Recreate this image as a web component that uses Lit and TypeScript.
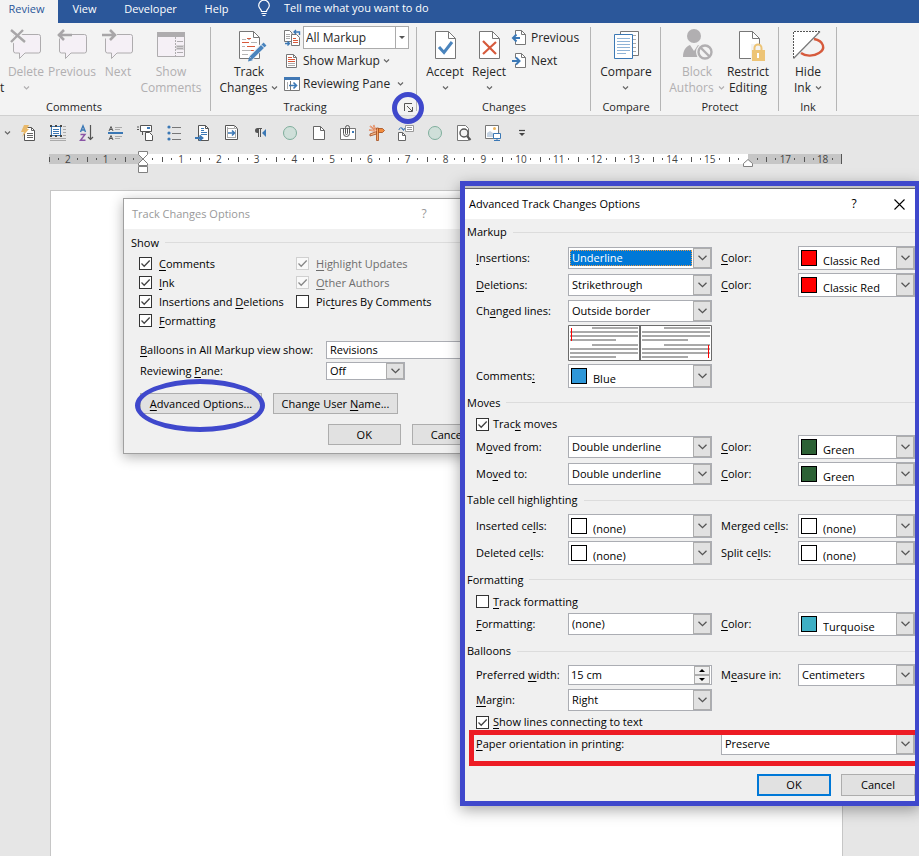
import { LitElement, html, css, svg, nothing, TemplateResult } from "lit";
import { customElement } from "lit/decorators.js";
import { styleMap } from "lit/directives/style-map.js";
import { classMap } from "lit/directives/class-map.js";

const icon = (w: number, h: number, body: unknown) =>
  html`<svg class="icon" width=${w} height=${h} viewBox="0 0 ${w} ${h}" fill="none" aria-hidden="true">${body}</svg>`;

const chevron = html`<svg class="chev" width="7" height="4" viewBox="0 0 7 4" fill="none" aria-hidden="true"><path d="M1 .5 3.5 3 6 .5" stroke="currentColor" stroke-width="1.2"/></svg>`;

const bubble = svg`<path d="M5 5.500H28.500a2 2 0 0 1 2 2V22a2 2 0 0 1-2 2H15L9.500 29.500V24H5.500a2 2 0 0 1-2-2V7.500a2 2 0 0 1 2-2Z" fill="#f5f0f6" stroke="#aeacae"/>`;

const big = {
  remove: icon(32, 32, svg`${bubble}<path d="M1 1 15 13M13 1 1 13" stroke="#f3f3f3" stroke-width="5"/><path d="M1 1 15 13M13 1 1 13" stroke="#a8a6a8" stroke-width="2.400"/>`),
  back: icon(32, 32, svg`${bubble}<path d="M0 6H16" stroke="#f3f3f3" stroke-width="7"/><path d="M2 6H16M8 1 3 6 8 11" stroke="#a8a6a8" stroke-width="2.600"/>`),
  forward: icon(32, 32, svg`${bubble}<path d="M0 6H15" stroke="#f3f3f3" stroke-width="7"/><path d="M0 6H13M8 1 13 6 8 11" stroke="#a8a6a8" stroke-width="2.600"/>`),
  pane: icon(32, 32, svg`<path d="M2.500 3.500H29.500V27.500H2.500Z" fill="#f5f0f6" stroke="#aeacae"/><path d="M2 3H30V8H2Z" fill="#aeacae"/><path d="M20.500 8V27" stroke="#aeacae" stroke-dasharray="2 1"/><path d="M22 12.500H28M22 23.500H28" stroke="#aeacae"/><path d="M21 16H29V21H21Z" fill="#d4d2d4"/><path d="M22 17.500H28M22 19.500H28" stroke="#aeacae"/>`),
  track: icon(32, 32, svg`<path d="M6.500 2.500H20.500L26.500 8.500V29.500H6.500Z" fill="#fff" stroke="#777"/><path d="M20.500 2.500V8.500H26.500" stroke="#777"/><path d="M9 10.500H13M18 13.500H24M9 17.500H12M9 21.500H18M9 25.500H15M15 10.500H17" stroke="#b5b5b5"/><path d="M14 9.500H18M9 13.500H16M14 17.500H22M18 21.500H22" stroke="#d8593a" stroke-width="1.200"/><path d="M18 28.500 31 15.500" stroke="#f3f3f3" stroke-width="6"/><path d="M18 29 32 15" stroke="#4a84bd" stroke-width="4"/><path d="M28 15.500 32 19.500" stroke="#fff"/><path d="M15 32.500 16.200 27.800 19.700 31.300Z" fill="#4a84bd"/>`),
  accept: icon(32, 32, svg`<path d="M6.500 2.500H19.500L26.500 9.500V29.500H6.500Z" fill="#fff" stroke="#777"/><path d="M19.500 2.500V9.500H26.500" stroke="#777"/><path d="M10 18 15 23.500 23 13" stroke="#4a84bd" stroke-width="3"/>`),
  reject: icon(32, 32, svg`<path d="M6.500 2.500H19.500L26.500 9.500V29.500H6.500Z" fill="#fff" stroke="#777"/><path d="M19.500 2.500V9.500H26.500" stroke="#777"/><path d="M10 12 23 25M23 13 10 25" stroke="#d65a3c" stroke-width="2.200"/>`),
  compare: icon(32, 32, svg`<path d="M10.500 2.500H28.500V26.500H10.500Z" fill="#fff" stroke="#777"/><path d="M23 6.500H26M23 10.500H26M23 14.500H26M23 18.500H26M23 22.500H26" stroke="#aaa"/><path d="M4.500 5.500H22.500V29.500H4.500Z" fill="#fff" stroke="#3b78b5"/><path d="M7 9.500H20M7 12.500H20M7 15.500H20M7 18.500H20M7 21.500H20M7 24.500H16" stroke="#8fb3d6"/>`),
  block: icon(32, 32, svg`<circle cx="13" cy="7" r="7" fill="#b1afb1"/><path d="M2 28C2 20 6 17 9 16L13 22 17 16 23 19 16 28Z" fill="#b1afb1"/><circle cx="24" cy="23" r="9" fill="#f3f3f3"/><circle cx="24" cy="23" r="6.500" stroke="#b1afb1" stroke-width="2.400"/><path d="M19.500 18.500 28.500 27.500" stroke="#b1afb1" stroke-width="2.400"/>`),
  restrict: icon(32, 32, svg`<path d="M7.500 2.500H20.500L27.500 9.500V29.500H7.500Z" fill="#fff" stroke="#777"/><path d="M20.500 2.500V9.500H27.500" stroke="#777"/><path d="M19 15H33V32H19Z" fill="#f3f3f3"/><path d="M20 21H33V32H20Z" fill="#edc476"/><path d="M22.500 21V19a3.500 3.500 0 0 1 7 0V21" stroke="#edc476" stroke-width="2"/><path d="M26 24V29" stroke="#fff" stroke-width="2"/>`),
  ink: icon(32, 32, svg`<path d="M22 10C32 12 34 20 27 24 21 28 13 27 9 24" stroke="#d65a3c" stroke-width="2.400"/><path d="M1 2H28L1 29Z" fill="#fff"/><path d="M28 2.500H1.500V29" stroke="#555" stroke-dasharray="2 1"/><path d="M28 2.500 1.500 29.500" stroke="#777" stroke-width="1.200"/>`),
};

const small = {
  markup: icon(16, 16, svg`<path d="M.5.500H5.500L8 3V11.500H.5Z" fill="#fff" stroke="#777"/><path d="M2 4.500H6M2 6.500H6M2 8.500H6" stroke="#aaa"/><path d="M7.500 4.500H12.500L15.500 7.500V15.500H7.500Z" fill="#fff" stroke="#777"/><path d="M9 8.500H12M9 10.500H14M9 12.500H14" stroke="#d8593a"/><path d="M1 13.500H5M3.500 11.500 5.500 13.500 3.500 15.500M15.500 5V2H10M12 0 10 2 12 4" stroke="#3b78b5" stroke-width="1.400"/>`),
  show: icon(16, 16, svg`<path d="M2.500 1.500H9.500L12.500 4.500V14.500H2.500Z" fill="#fff" stroke="#777"/><path d="M9.500 1.500V4.500H12.500" stroke="#777"/><path d="M4 4.500H8M4 6.500H11M4 8.500H11" stroke="#d8593a"/><path d="M4 10.500H11M4 12.500H11" stroke="#aaa"/>`),
  review: icon(16, 16, svg`<path d="M.5 1.500H15.500V14.500H.5Z" fill="#fff" stroke="#777"/><path d="M0 1H16V4H0Z" fill="#4178b4"/><path d="M3.500 6V13" stroke="#aaa"/><path d="M6.500 5V14" stroke="#777"/><path d="M5 9.500H12M9.500 6.500 12.500 9.500 9.500 12.500" stroke="#3b78b5" stroke-width="1.600"/>`),
  prev: icon(16, 16, svg`<path d="M3.500 5V.5H9.500L13.500 4.500V14.500H3.500V11" fill="#fff" stroke="#777"/><path d="M9.500.5V4.500H13.500" stroke="#777"/><path d="M1.500 8H8M4.500 4.500 1 8 4.500 11.500" stroke="#3b78b5" stroke-width="2"/>`),
  next: icon(16, 16, svg`<path d="M3.500 5V.5H9.500L13.500 4.500V14.500H3.500V11" fill="#fff" stroke="#777"/><path d="M9.500.5V4.500H13.500" stroke="#777"/><path d="M0 8H7M4 4.500 7.500 8 4 11.500" stroke="#3b78b5" stroke-width="2"/>`),
};

const quick: [string, TemplateResult][] = [
  ["AutoText", icon(16, 16, svg`<path d="M3.500 2.500H10.500L13.500 5.500V15.500H3.500Z" fill="#fff" stroke="#555"/><path d="M10.500 2.500V5.500H13.500M6 8.500H12M6 10.500H12M6 12.500H12" stroke="#666"/><path d="M3 0H8L6 4H8L1 12 3 7H0Z" fill="#e9b96a"/>`)],
  ["Text box", icon(16, 16, svg`<path d="M0 15.500H16M0 13.500H16M13 1.500H16M13 4.500H16M13 7.500H16M13 10.500H16" stroke="#aaa"/><path d="M1.500 1.500H10.500V10.500H1.500Z" fill="#fff" stroke="#3b78b5"/><path d="M3 4.500H9M3 6.500H9M3 8.500H9" stroke="#3b78b5"/><path d="M0 0H2V2H0ZM10 0H12V2H10ZM0 10H2V12H0ZM10 10H12V12H10ZM5 0H7V2H5ZM5 10H7V12H5Z" fill="#444"/>`)],
  ["Sort", icon(16, 16, svg`<path d="M1.500 7 4 .8 6.500 7M2.200 5H6" stroke="#3b78b5" stroke-width="1.400"/><path d="M1.500 9.500H6L1.500 15.200H6.500" stroke="#8a55a5" stroke-width="1.400"/><path d="M11.500 0V15M9 12 11.500 14.500 14 12" stroke="#555" stroke-width="1.200"/>`)],
  ["Spacing", icon(16, 16, svg`<path d="M1 6 3 1.500 5 6M2 4.500H4M1 15 3 10.500 5 15M2 13.500H4" stroke="#555"/><path d="M7 2.500H14M7 4.500H12M7 11.500H14M7 13.500H12" stroke="#aaa"/><path d="M0 8H15" stroke="#3b78b5" stroke-width="2"/>`)],
  ["Link boxes", icon(16, 16, svg`<path d="M0 2H2M0 4.500H2" stroke="#555"/><path d="M3.500.500H14.500V6.500H3.500Z" fill="#fff" stroke="#555"/><path d="M10 2H13V4H10Z" fill="#3b78b5"/><path d="M8.500 7.500H12.500L15.500 10.500V15.500H8.500Z" fill="#fff" stroke="#555"/><path d="M5.500 7V10" stroke="#555"/>`)],
  ["Bullets", icon(16, 16, svg`<circle cx="3" cy="2" r="1.600" fill="#3b78b5"/><circle cx="3" cy="8" r="1.600" fill="#3b78b5"/><circle cx="3" cy="14" r="1.600" fill="#3b78b5"/><path d="M6 2.500H15M6 8.500H15M6 14.500H15" stroke="#777"/>`)],
  ["Insert file", icon(16, 16, svg`<path d="M3.500.500H10.500L13.500 3.500V15.500H3.500Z" fill="#fff" stroke="#555"/><path d="M10.500.500V3.500H13.500" stroke="#555"/><path d="M6 3.500H9M6 5.500H9M6 7.500H12M6 9.500H12" stroke="#3b78b5"/><path d="M0 13H7M4.500 10.500 7.500 13 4.500 15.500" stroke="#3b78b5" stroke-width="1.800"/>`)],
  ["Page fit", icon(16, 16, svg`<path d="M1.500.500H10.500L13.500 3.500V14.500H1.500Z" fill="#fff" stroke="#555"/><path d="M3.500 2V13M11.500 5V13M3 3.500H10M3 12.500H12M10.500.500V3.500H13.500" stroke="#aaa"/><path d="M4 8H10M8 5.500 10.500 8 8 10.500" stroke="#3b78b5" stroke-width="1.600"/>`)],
  ["Right to left", icon(16, 16, svg`<path d="M6 3H4.500a2.500 2.500 0 0 0 0 5H5V12H6V4H7V12H8V4H9V3Z" fill="#555"/><path d="M13 4V12L9 8Z" fill="#3b78b5"/>`)],
  ["Record", icon(16, 16, svg`<circle cx="8" cy="8" r="6.500" fill="#cfdfd9" stroke="#7fae9c"/>`)],
  ["New", icon(16, 16, svg`<path d="M2.500 1.500H9.500L13.500 5.500V14.500H2.500Z" fill="#fff" stroke="#666"/><path d="M9.500 1.500V5.500H13.500" stroke="#666"/>`)],
  ["Attach", icon(16, 16, svg`<path d="M.5 3.500H15.500V14.500H.5Z" fill="#fff" stroke="#777"/><path d="M12 6H14V8H12Z" fill="#3b78b5"/><path d="M3.500 3V8.500a3 3 0 0 0 6 0V2.500a2 2 0 0 0-4 0V8.500a1 1 0 0 0 2 0V3" stroke="#555" stroke-width="1"/>`)],
  ["Signpost", icon(16, 16, svg`<path d="M7.500 3H9.500V15.500H7.500Z" fill="#f6a868" stroke="#a24a1c" stroke-width=".8"/><path d="M9.500 3.500H13.500L15.500 5.500 13.500 7.500H9.500Z" fill="#f28c3c" stroke="#a24a1c" stroke-width=".8"/><path d="M7.500 6.500 1 9 1 11 7.500 9Z" fill="#f6b98a" stroke="#a24a1c" stroke-width=".8"/><path d="M1 1 7 6M4.500 0 7 6M0 5 7 6" stroke="#d8693a" stroke-width="1.600"/><path d="M1 1 7 6M4.500 0 7 6M0 5 7 6" stroke="#fbd9bd" stroke-width=".6"/>`)],
  ["Envelope", icon(16, 16, svg`<path d="M7.500.500H15.500V6.500H7.500Z" fill="#fff" stroke="#999"/><path d="M9 2.500H14M9 4.500H14" stroke="#999"/><path d="M1 5C1 2 5 2 5.500 5M3.500 3 5.500 5.500 7 3" stroke="#3b78b5"/><path d="M.5 7.500H4.500L7.500 10.500V15.500H.5Z" fill="#fff" stroke="#666"/><path d="M4.500 7.500V10.500H7.500" stroke="#666"/>`)],
  ["Stop", icon(16, 16, svg`<circle cx="8" cy="8" r="6.500" fill="#cfdfd9" stroke="#7fae9c"/>`)],
  ["Print preview", icon(16, 16, svg`<path d="M1.500.500H9.500L12.500 3.500V15.500H1.500Z" fill="#fff" stroke="#777"/><circle cx="8" cy="8" r="4" fill="#f3f3f3" stroke="#555" stroke-width="1.400"/><path d="M11 11 14.500 15" stroke="#555" stroke-width="2"/>`)],
  ["Picture", icon(16, 16, svg`<path d="M.5.500H13.500V13.500H.5Z" fill="#fff" stroke="#777"/><path d="M2 12V8L5 6 8 8V12Z" fill="#c5d3e2"/><circle cx="9.500" cy="3.500" r="1.500" fill="#edb45c"/><path d="M8.500 8.500H15.500V13.500H8.500Z" fill="#fff" stroke="#3b78b5"/><path d="M9 15.500H15M12 13V15" stroke="#3b78b5"/>`)],
  ["Customize", icon(16, 16, svg`<path d="M5 5.500H11" stroke="#444" stroke-width="1.200"/><path d="M5 8H11L8 11Z" fill="#444"/>`)],
];

interface Combo { id: string; value: string; swatch?: string; active?: boolean; kind?: string }

const combo = (c: Combo) => html`
  <span class=${classMap({ combo: true, tinted: !!c.swatch, active: !!c.active, [c.kind ?? "plain"]: true })}>
    ${c.swatch ? html`<i class="swatch" style=${styleMap({ background: c.swatch })}></i>` : nothing}
    <select id=${c.id}><option>${c.value}</option></select>
    <span class="drop"><svg width="9" height="6" viewBox="0 0 9 6" fill="none" aria-hidden="true"><path d="M.5.700 4.500 4.700 8.500.700" stroke="#555" stroke-width="1.300"/></svg></span>
  </span>`;

const field = (label: unknown, c: Combo, cls = "") => html`<label class=${"lbl " + cls} for=${c.id}>${label}</label>${combo(c)}`;

const tick = (label: unknown, checked: boolean, disabled = false) =>
  html`<label class=${classMap({ tick: true, off: disabled })}><input type="checkbox" .checked=${checked} ?disabled=${disabled}><span>${label}</span></label>`;

const controls = css`
  * { box-sizing: border-box; }
  button, select, input { font: inherit; color: inherit; margin: 0; }
  u { text-underline-offset: 2px; text-decoration-thickness: 1px; }
  :host { display: block; font: 11px/16px "Open Sans", "Noto Sans", sans-serif; color: #000; }
  .title { display: flex; align-items: center; height: 30px; background: #fff; padding: 0 8px 0 4px; }
  .title h2 { flex: 1; margin: 0; font: inherit; }
  .title button { border: 0; background: none; padding: 0; display: grid; place-items: center; }
  .help { font-size: 12px; }
  .heading { display: flex; align-items: center; gap: 6px; margin: 0; font: inherit; }
  .heading::after { content: ""; flex: 1; height: 1px; background: #dcdcdc; }
  .lbl { white-space: nowrap; }
  .combo { display: flex; align-items: center; background: #fff; border: 1px solid #abadb3; height: 22px; min-width: 0; padding-left: 1px; }
  .combo select { appearance: none; border: 0; background: none; flex: 1; min-width: 0; height: 16px; line-height: 16px; padding: 0 0 0 2px; outline: 0; }
  .combo.active select { background: #0078d7; color: #fff; outline: 1px dotted #e89a4a; outline-offset: -1px; }
  .drop { align-self: stretch; width: 18px; flex: none; display: grid; place-items: center; background: #e1e1e1; border: 1px solid #adadad; margin-left: 1px; }
  .tinted { height: 24px; padding-left: 2px; }
  .tinted select { align-self: end; padding-left: 6px; }
  .swatch { width: 16px; height: 16px; border: 1px solid #000; flex: none; }
  .tick { display: flex; align-items: center; gap: 4px; white-space: nowrap; }
  .tick input { appearance: none; width: 13px; height: 13px; border: 1px solid #333; background: #fff; flex: none; }
  .tick input:checked { background: #fff url("data:image/svg+xml,%3Csvg xmlns='http://www.w3.org/2000/svg' viewBox='0 0 11 11'%3E%3Cpath d='M1.500 5.500 4.200 8.200 9.700 2.500' fill='none' stroke='%23444' stroke-width='1.300'/%3E%3C/svg%3E"); }
  .tick.off { color: #6d6d6d; }
  .tick.off input { border-color: #bcbcbc; opacity: 0.6; }
  .push { height: 21px; border: 1px solid #adadad; background: #e1e1e1; padding: 0; text-align: center; white-space: nowrap; line-height: 16px; }
`;

@customElement("track-options")
class TrackOptions extends LitElement {
  static styles = [controls, css`
    :host { border: 1px solid #a0a0a0; background: #f0f0f0; box-shadow: 0 3px 12px rgba(0, 0, 0, 0.3); }
    .title { color: #999; padding-left: 8px; }
    .title .help { width: 76px; padding-right: 44px; }
    .heading { height: 25px; padding-left: 7px; padding-top: 2px; }
    .ticks { display: grid; grid-template-columns: 157px 1fr; grid-auto-rows: 19px; padding-left: 15px; }
    .tick { gap: 7px; }
    .fields { display: grid; grid-template-columns: 186px 79px 1fr; grid-auto-rows: 21px; align-items: center; margin-top: 9px; padding: 0 8px 0 16px; }
    .combo { height: 18px; }
    .wide { grid-column: 2 / 4; }
    .row { display: flex; gap: 11px; padding-left: 16px; margin-top: 12px; position: relative; }
    .first { width: 122px; }
    .second { width: 125px; }
    .end { padding: 0 8px 8px 204px; margin-top: 10px; }
    .end .push { width: 73px; }
    .ring { position: absolute; left: 11px; top: -14px; width: 130px; height: 53px; border: 5px solid #3f48cc; border-radius: 50%; }
  `];
  render() {
    return html`
      <header class="title"><h2>Track Changes Options</h2><button class="help" aria-label="Help">?</button></header>
      <h3 class="heading">Show</h3>
      <div class="ticks">
        ${tick(html`<u>C</u>omments`, true)}${tick(html`<u>H</u>ighlight Updates`, true, true)}
        ${tick(html`<u>I</u>nk`, true)}${tick(html`<u>O</u>ther Authors`, true, true)}
        ${tick(html`Insertions and <u>D</u>eletions`, true)}${tick(html`Pic<u>t</u>ures By Comments`, false)}
        ${tick(html`<u>F</u>ormatting`, true)}
      </div>
      <div class="fields">
        ${field(html`<u>B</u>alloons in All Markup view show:`, { id: "balloons", value: "Revisions", kind: "wide" })}
        ${field(html`Reviewing <u>P</u>ane:`, { id: "pane", value: "Off" })}
      </div>
      <div class="row">
        <button class="push first"><u>A</u>dvanced Options...</button>
        <button class="push second">Change User <u>N</u>ame...</button>
        <i class="ring"></i>
      </div>
      <div class="row end"><button class="push">OK</button><button class="push">Cancel</button></div>`;
  }
}

@customElement("advanced-options")
class AdvancedOptions extends LitElement {
  static styles = [controls, css`
    :host { border: 5px solid #3f48cc; background: #f0f0f0; box-shadow: 0 4px 14px rgba(0, 0, 0, 0.35); }
    .edge { height: 3px; background: #c4c4c4; border-bottom: 1px solid #6b6b6b; }
    .title { padding-right: 6px; }
    .title .help { width: 70px; }
    .title .close { width: 20px; }
    .form { display: grid; align-items: center; padding-left: 11px; grid-template-columns: 92px 144px 86px 1fr;
      grid-template-rows: 26px 26px 27px 25px 39px 28px 25px 18px 27px 27px 26px 26px 27px 27px 17px 28px 26px 22px 27px 18px; }
    .heading, .all { grid-column: 1 / -1; }
    .heading { margin-left: -9px; }
    .start { grid-column: 1; }
    .side { padding-left: 9px; }
    .preview { grid-column: 2 / 3; display: block; }
    .spin { display: flex; height: 20px; border: 1px solid #abadb3; background: #fff; }
    .spin input { flex: 1; min-width: 0; border: 0; background: none; padding: 0 0 0 2px; outline: 0; }
    .spin span { display: grid; grid-template-rows: 1fr 1fr; width: 16px; margin-right: 1px; }
    .spin button { border: 1px solid #adadad; background: #f0f0f0; padding: 0; display: grid; place-items: center; min-height: 0; }
    .paper { position: relative; display: grid; grid-template-columns: 245px 1fr; align-items: center; height: 26px; padding-left: 11px; }
    .mark { position: absolute; left: 4px; right: 0; top: -1px; height: 36px; border: 5px solid #ed1c24; border-right: 0; }
    .actions { display: flex; justify-content: end; gap: 10px; padding: 17px 0 5px; }
    .actions .push { width: 74px; height: 22px; }
    .actions .primary { border: 2px solid #0078d7; line-height: 14px; }
  `];
  render() {
    const color = html`<u>C</u>olor:`;
    return html`
      <div class="edge"></div>
      <header class="title">
        <h2>Advanced Track Changes Options</h2>
        <button class="help" aria-label="Help">?</button>
        <button class="close" aria-label="Close"><svg width="11" height="11" viewBox="0 0 11 11"><path d="M.5.500 10.500 10.500M10.500.500.500 10.500" stroke="#000" stroke-width="1.100"/></svg></button>
      </header>
      <div class="form">
        <h3 class="heading">Markup</h3>
        ${field(html`<u>I</u>nsertions:`, { id: "ins", value: "Underline", active: true })}
        ${field(color, { id: "insc", value: "Classic Red", swatch: "#ff0000" }, "side")}
        ${field(html`<u>D</u>eletions:`, { id: "del", value: "Strikethrough" })}
        ${field(color, { id: "delc", value: "Classic Red", swatch: "#ff0000" }, "side")}
        ${field(html`Ch<u>a</u>nged lines:`, { id: "lines", value: "Outside border" })}
        <svg class="preview" width="144" height="36" viewBox="0 0 144 36" aria-hidden="true">
          <path d="M.5.500H143.500V35.500H.5Z" fill="#fff" stroke="#6b6b6b"/><path d="M72 0V36" stroke="#6b6b6b" stroke-width="2"/>
          <path d="M24 3H70M2 7H70M2 11H70M2 15H48M24 20H70M2 24H70M2 28H70M2 32H48M96 3H142M74 7H142M74 11H142M74 15H120M96 20H142M74 24H142M74 28H142M74 32H120" stroke="#a9a9a9" stroke-width="2"/>
          <path d="M3.500 3V16M140.500 20V33" stroke="#f00"/>
        </svg>
        ${field(html`Comments<u>:</u>`, { id: "com", value: "Blue", swatch: "#2e97d8" }, "start")}
        <h3 class="heading">Moves</h3>
        <div class="all">${tick(html`Trac<u>k</u> moves`, true)}</div>
        ${field(html`M<u>o</u>ved from:`, { id: "from", value: "Double underline" })}
        ${field(color, { id: "fromc", value: "Green", swatch: "#2c6135" }, "side")}
        ${field(html`Mo<u>v</u>ed to:`, { id: "to", value: "Double underline" })}
        ${field(color, { id: "toc", value: "Green", swatch: "#2c6135" }, "side")}
        <h3 class="heading">Table cell highlighting</h3>
        ${field(html`Inserted ce<u>l</u>ls:`, { id: "ic", value: "(none)", swatch: "#ffffff" })}
        ${field(html`Merged ce<u>l</u>ls:`, { id: "mc", value: "(none)", swatch: "#ffffff" }, "side")}
        ${field(html`Deleted ce<u>l</u>ls:`, { id: "dc", value: "(none)", swatch: "#ffffff" })}
        ${field(html`Split ce<u>l</u>ls:`, { id: "sc", value: "(none)", swatch: "#ffffff" }, "side")}
        <h3 class="heading">Formatting</h3>
        <div class="all">${tick(html`<u>T</u>rack formatting`, false)}</div>
        ${field(html`<u>F</u>ormatting:`, { id: "fmt", value: "(none)" })}
        ${field(color, { id: "fmtc", value: "Turquoise", swatch: "#3eafc4" }, "side")}
        <h3 class="heading">Balloons</h3>
        <label class="lbl" for="width">Preferred <u>w</u>idth:</label>
        <span class="spin"><input id="width" type="text" value="15 cm"><span>
          <button aria-label="Increase"><svg width="6" height="3" viewBox="0 0 6 3"><path d="M0 3 3 0 6 3Z"/></svg></button>
          <button aria-label="Decrease"><svg width="6" height="3" viewBox="0 0 6 3"><path d="M0 0 3 3 6 0Z"/></svg></button></span></span>
        ${field(html`M<u>e</u>asure in:`, { id: "unit", value: "Centimeters" }, "side")}
        ${field(html`<u>M</u>argin:`, { id: "margin", value: "Right" })}
        <div class="all">${tick(html`<u>S</u>how lines connecting to text`, true)}</div>
      </div>
      <div class="paper">
        ${field(html`<u>P</u>aper orientation in printing:`, { id: "paper", value: "Preserve" })}
        <i class="mark"></i>
      </div>
      <div class="actions"><button class="push primary">OK</button><button class="push">Cancel</button></div>`;
  }
}

@customElement("app-root")
class AppRoot extends LitElement {
  static styles = css`
    * { box-sizing: border-box; }
    :host { display: flex; flex-direction: column; position: relative; min-height: 100vh; overflow: hidden; background: #e6e6e6; color: #262626; font: 12px/16px "Open Sans", "Noto Sans", sans-serif; }
    button, select { font: inherit; color: inherit; border: 0; background: none; padding: 0; margin: 0; }
    .icon, .chev { display: block; flex: none; overflow: visible; }
    .chev { color: #666; }
    .tabs { display: flex; height: 23px; background: #2b579a; color: #fff; margin-left: -5px; font-size: 11px; }
    .tabs button { line-height: 18px; padding-bottom: 5px; width: 53px; }
    .tabs .current { width: 63px; background: #f3f3f3; color: #2b579a; }
    .tabs .long { width: 79px; }
    .tabs .tell { display: flex; gap: 14px; width: auto; margin-left: 15px; line-height: 16px; }
    .ribbon { display: flex; height: 93px; background: #f3f3f3; border-bottom: 1px solid #d0d0d0; }
    .group { position: relative; display: flex; flex-direction: column; height: 92px; flex: none; }
    .group::after { content: ""; position: absolute; right: 0; top: 4px; bottom: 4px; width: 1px; background: #b5b5b5; }
    .body { display: flex; height: 76px; }
    .name { text-align: center; font-size: 11px; }
    .cmd { display: flex; flex-direction: column; align-items: center; padding-top: 6px; line-height: 16px; white-space: nowrap; }
    .cmd .icon { margin-bottom: 3px; }
    .cmd .line { display: flex; align-items: center; gap: 4px; height: 16px; justify-content: center; }
    .cmd:disabled, .cmd:disabled .chev { color: #b1afb1; }
    .w40 { width: 40px; } .w44 { width: 44px; } .w48 { width: 48px; } .w62 { width: 62px; }
    .comments { width: 211px; } .comments .name { padding-right: 63px; }
    .cut { width: 4px; padding-top: 57px; }
    .tracking { width: 206px; } .tracking .body { padding-left: 7px; } .tracking .name { padding-right: 18px; }
    .changes { width: 174px; } .changes .body { padding-left: 6px; } .changes .stack { padding-left: 1px; }
    .compare { width: 70px; } .protect { width: 118px; } .ink { width: 58px; }
    .compare .body, .ink .body { justify-content: center; }
    .protect .body { padding-left: 5px; }
    .stack { display: flex; flex-direction: column; padding: 3px 0 0 4px; }
    .item { display: flex; align-items: center; gap: 3px; height: 23px; white-space: nowrap; }
    .far .chev { margin-left: 4px; }
    .box { display: flex; align-items: center; width: 106px; height: 23px; border: 1px solid #ababab; background: #fff; }
    .box select { appearance: none; flex: 1; min-width: 0; padding-left: 2px; }
    .box .arrow { width: 13px; height: 21px; border-left: 1px solid #ababab; display: grid; place-items: center; }
    .launcher { position: absolute; right: 4px; bottom: 3px; }
    .ring { position: absolute; right: -7px; bottom: -9px; width: 32px; height: 32px; border: 5px solid #3f48cc; border-radius: 50%; z-index: 1; }
    .quick { display: flex; align-items: center; height: 33px; }
    .quick button { width: 29px; display: grid; place-items: center; flex: none; }
    .quick .more { width: 14px; }
    .ruler { display: grid; grid-template-columns: repeat(21, minmax(0, 1fr)); width: min(793px, 100%); margin: 5px 0 26px 49px; height: 10px; font-size: 10px; line-height: 10px; }
    .cm { position: relative; display: flex; justify-content: center; gap: 2px; align-items: center; background: #fff; color: #444; }
    .cm b { font-weight: 400; width: 14px; text-align: center; }
    .cm i { width: 1px; height: 2px; background: #555; }
    .cm::before { content: ""; position: absolute; left: 0; top: 3px; width: 1px; height: 5px; background: #555; }
    .gray { background: #c6c6c6; }
    .cm:last-child { border-right: 1px solid #555; }
    .left { background: linear-gradient(to right, #c6c6c6 50%, #fff 50%); }
    .right { background: linear-gradient(to right, #fff 50%, #c6c6c6 50%); }
    .stop { position: absolute; left: 50%; margin-left: -5px; top: -3px; }
    .page { flex: 1; width: min(793px, 100%); margin-left: 50px; background: #fff; border: 1px solid #c6c6c6; border-bottom: 0; }
    track-options { position: absolute; left: 123px; top: 198px; width: 370px; }
    advanced-options { position: absolute; left: 460px; top: 181px; width: 460px; }
  `;

  private cmd(art: TemplateResult, lines: string[], opt: { cls?: string; off?: boolean; drop?: boolean } = {}) {
    return html`<button class="cmd ${opt.cls ?? ""}" ?disabled=${opt.off}>${art}
      ${lines.map((t, i) => html`<span class="line">${t}${opt.drop && i === lines.length - 1 && i > 0 ? chevron : nothing}</span>`)}
      ${opt.drop && lines.length === 1 ? html`<span class="line">${chevron}</span>` : nothing}</button>`;
  }

  private centimetre(n: number) {
    const shade = n < 0 || n > 16 ? "gray" : n === 0 ? "left" : n === 16 ? "right" : "";
    return html`<span class="cm ${shade}"><i></i><b>${n === 0 || n === 16 ? nothing : Math.abs(n)}</b><i></i>
      ${n === 0 ? html`<svg class="stop" width="10" height="22" viewBox="0 0 10 22" fill="#fff" stroke="#808080"><path d="M.5.500H9.500V3.500L5 8 .5 3.500ZM.5 14.500V12.500L5 8 9.500 12.500V14.500ZM.5 15.500H9.500V21.500H.5Z"/></svg>` : nothing}
      ${n === 16 ? html`<svg class="stop" width="10" height="16" viewBox="0 0 10 16" fill="#fff" stroke="#808080"><path d="M.5 15.500V12.500L5 8.500 9.500 12.500V15.500Z"/></svg>` : nothing}</span>`;
  }

  render() {
    return html`
      <nav class="tabs">
        <button class="current">Review</button><button>View</button><button class="long">Developer</button><button>Help</button>
        <button class="tell">${icon(12, 17, svg`<path d="M3.500 11.500C3.500 9 .7 8.500.7 5.500a5.300 5.300 0 0 1 10.600 0C11.300 8.500 8.500 9 8.500 11.500ZM3.500 13.500H8.500M4.500 15.500H7.500" stroke="#fff" stroke-width="1.200"/>`)}Tell me what you want to do</button>
      </nav>
      <div class="ribbon">
        <section class="group comments">
          <div class="body">
            <span class="cut">t</span>
            ${this.cmd(big.remove, ["Delete"], { cls: "w44", off: true, drop: true })}
            ${this.cmd(big.back, ["Previous"], { cls: "w48", off: true })}
            ${this.cmd(big.forward, ["Next"], { cls: "w44", off: true })}
            ${this.cmd(big.pane, ["Show", "Comments"], { cls: "w62", off: true })}
          </div>
          <div class="name">Comments</div>
        </section>
        <section class="group tracking">
          <div class="body">
            ${this.cmd(big.track, ["Track", "Changes"], { cls: "w62", drop: true })}
            <div class="stack">
              <div class="item">${small.markup}<span class="box"><select aria-label="Display for review"><option>All Markup</option></select><span class="arrow"><svg width="6" height="3" viewBox="0 0 6 3" fill="#555"><path d="M0 0H6L3 3Z"/></svg></span></span></div>
              <button class="item">${small.show}Show Markup ${chevron}</button>
              <button class="item far">${small.review}Reviewing Pane ${chevron}</button>
            </div>
          </div>
          <div class="name">Tracking</div>
          <button class="launcher" aria-label="Track changes options"><svg class="icon" width="9" height="9" viewBox="0 0 9 9" fill="none" stroke="#555"><path d="M.5 8V.5H8M3 3 8 8M8.500 4V8.500H4"/></svg></button>
          <i class="ring"></i>
        </section>
        <section class="group changes">
          <div class="body">
            ${this.cmd(big.accept, ["Accept"], { cls: "w44", drop: true })}
            ${this.cmd(big.reject, ["Reject"], { cls: "w44", drop: true })}
            <div class="stack">
              <button class="item">${small.prev}Previous</button>
              <button class="item">${small.next}Next</button>
            </div>
          </div>
          <div class="name">Changes</div>
        </section>
        <section class="group compare"><div class="body">${this.cmd(big.compare, ["Compare"], { drop: true })}</div><div class="name">Compare</div></section>
        <section class="group protect"><div class="body">${this.cmd(big.block, ["Block", "Authors"], { off: true, drop: true, cls: "w62" })}${this.cmd(big.restrict, ["Restrict", "Editing"], { cls: "w40" })}</div><div class="name">Protect</div></section>
        <section class="group ink"><div class="body">${this.cmd(big.ink, ["Hide", "Ink"], { drop: true })}</div><div class="name">Ink</div></section>
      </div>
      <div class="quick"><button class="more" aria-label="More">${chevron}</button>${quick.map(([name, art]) => html`<button aria-label=${name}>${art}</button>`)}</div>
      <div class="ruler">${Array.from({ length: 21 }, (_, i) => this.centimetre(i - 2))}</div>
      <main class="page"></main>
      <track-options></track-options>
      <advanced-options></advanced-options>`;
  }
}
